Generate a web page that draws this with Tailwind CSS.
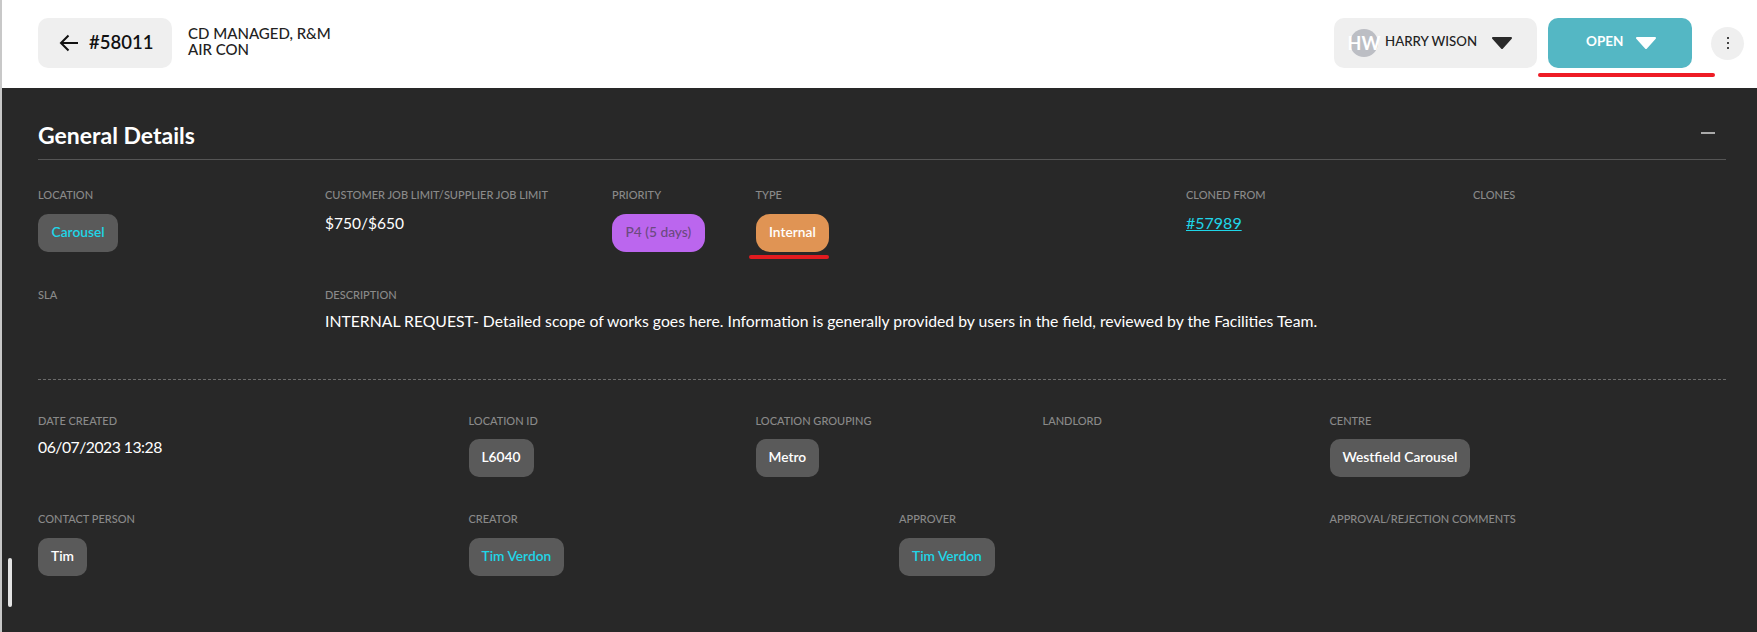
<!DOCTYPE html>
<html lang="en">
<head>
  <meta charset="UTF-8">
  <meta name="viewport" content="width=device-width, initial-scale=1.0">
  <title>Job #58011</title>
  <script src="https://cdn.jsdelivr.net/npm/@tailwindcss/browser@4"></script>
</head>
<body class="h-[632px] overflow-hidden bg-[#282828] font-['Lato',sans-serif]">
  <div class="relative h-[632px] border-l-2 border-[#c8c8c8]">
    <!-- top bar -->
    <header class="flex h-[88px] items-center justify-between bg-white pb-[2px] pl-[36px] pr-[13px]">
      <div class="flex items-center">
        <a href="#" class="flex h-[50px] w-[134px] items-center rounded-[10px] bg-[#efefef] pl-[21px] text-[#111]">
          <svg class="h-[18px] w-[20px]" viewBox="0 0 20 18" fill="none" stroke="currentColor" stroke-width="2">
            <path d="M19 9H2M9.5 1.5 2 9l7.500 7.500"/>
          </svg>
          <span class="ml-[10px] pb-[1px] text-[18.5px] font-semibold">#58011</span>
        </a>
        <div class="mb-[4px] ml-[16px] text-[15px] font-medium leading-[16px] text-[#222]">
          <div>CD MANAGED, R&amp;M</div>
          <div>AIR CON</div>
        </div>
      </div>
      <div class="flex items-center">
        <div class="flex h-[50px] w-[203px] items-center rounded-[10px] bg-[#efefef] pl-[16px]">
          <span class="flex h-[28px] w-[28px] items-center justify-center whitespace-nowrap rounded-full bg-[#bcbec4] text-[18px] font-bold text-white">HW</span>
          <span class="mb-[2px] ml-[7px] text-[13.25px] font-medium text-[#222]">HARRY WISON</span>
          <svg class="ml-[15px] h-[12px] w-[20px]" viewBox="0 0 20 12" fill="#2a2a2a" stroke="#2a2a2a" stroke-width="2" stroke-linejoin="round"><path d="M1 1h18L10 11z"/></svg>
        </div>
        <div class="relative ml-[11px] flex h-[50px] w-[144px] items-center rounded-[10px] bg-[#54b7c4] pl-[38px]">
          <span class="mb-[4px] text-[13.5px] font-bold text-white">OPEN</span>
          <svg class="ml-[13px] h-[12px] w-[20px]" viewBox="0 0 20 12" fill="#fff" stroke="#fff" stroke-width="2" stroke-linejoin="round"><path d="M1 1h18L10 11z"/></svg>
          <span class="absolute left-[-10px] top-[55px] h-[4px] w-[177px] rounded-full bg-[#ee1c25]"></span>
        </div>
        <button class="ml-[19px] flex h-[33px] w-[33px] flex-col items-center justify-center gap-[3px] rounded-full bg-[#efefef]">
          <span class="h-[2px] w-[2px] bg-[#444]"></span>
          <span class="h-[2px] w-[2px] bg-[#444]"></span>
          <span class="h-[2px] w-[2px] bg-[#444]"></span>
        </button>
      </div>
    </header>

    <!-- general details -->
    <main class="pl-[36px] pr-[31px] pt-[34px]">
      <div class="flex h-[38px] items-start justify-between border-b border-[#555]">
        <h2 class="text-[23px] font-bold leading-[26px] text-white">General Details</h2>
        <span class="mr-[11px] mt-[10px] h-[2px] w-[14px] bg-[#aaa]"></span>
      </div>

      <div class="grid grid-cols-12 gap-x-[34px] gap-y-[36px] pt-[28px]">
        <div class="col-span-2">
          <div class="h-[14px] text-[11px] font-medium leading-[14px] text-[#8a8a8a]">LOCATION</div>
          <span class="mt-[12px] inline-flex h-[38px] items-center rounded-[10px] bg-[#5a5a5a] px-[13.5px] pb-[1px] text-[13.75px] font-semibold text-[#1fd6e8]">Carousel</span>
        </div>
        <div class="col-span-2">
          <div class="h-[14px] whitespace-nowrap text-[11px] font-medium leading-[14px] text-[#8a8a8a]">CUSTOMER JOB LIMIT/SUPPLIER JOB LIMIT</div>
          <div class="mt-[11px] text-[15.5px] leading-[20px] text-white">$750/$650</div>
        </div>
        <div class="col-span-1">
          <div class="h-[14px] text-[11px] font-medium leading-[14px] text-[#8a8a8a]">PRIORITY</div>
          <span class="mt-[12px] inline-flex h-[38px] items-center whitespace-nowrap rounded-[14px] bg-[#bb66ee] px-[13.5px] pb-[1px] text-[13.75px] font-medium text-[#6b4a80]">P4 (5 days)</span>
        </div>
        <div class="col-span-3">
          <div class="h-[14px] text-[11px] font-medium leading-[14px] text-[#8a8a8a]">TYPE</div>
          <span class="relative mt-[12px] inline-flex h-[38px] items-center rounded-[14px] bg-[#e09454] px-[13.5px] pb-[1px] text-[13.75px] font-semibold text-white">
            Internal
            <span class="absolute left-[-7px] top-[41px] h-[4px] w-[80px] rounded-full bg-[#e21b1f]"></span>
          </span>
        </div>
        <div class="col-span-2">
          <div class="h-[14px] text-[11px] font-medium leading-[14px] text-[#8a8a8a]">CLONED FROM</div>
          <a href="#" class="mt-[11px] block text-[16px] leading-[20px] text-[#1fd6e8] underline">#57989</a>
        </div>
        <div class="col-span-2">
          <div class="h-[14px] text-[11px] font-medium leading-[14px] text-[#8a8a8a]">CLONES</div>
        </div>

        <div class="col-span-2">
          <div class="h-[14px] text-[11px] font-medium leading-[14px] text-[#8a8a8a]">SLA</div>
        </div>
        <div class="col-span-10">
          <div class="h-[14px] text-[11px] font-medium leading-[14px] text-[#8a8a8a]">DESCRIPTION</div>
          <p class="mt-[9px] text-[15.75px] leading-[20px] text-white">INTERNAL REQUEST- Detailed scope of works goes here. Information is generally provided by users in the field, reviewed by the Facilities Team.</p>
        </div>
      </div>

      <div class="mt-[48px] border-t border-dashed border-[#6a6a6a]"></div>

      <div class="grid grid-cols-12 gap-x-[34px] gap-y-[35px] pt-[34px]">
        <div class="col-span-3">
          <div class="h-[14px] text-[11px] font-medium leading-[14px] text-[#8a8a8a]">DATE CREATED</div>
          <div class="mt-[9px] text-[15.75px] leading-[20px] tracking-[-0.5px] text-white">06/07/2023 13:28</div>
        </div>
        <div class="col-span-2">
          <div class="h-[14px] text-[11px] font-medium leading-[14px] text-[#8a8a8a]">LOCATION ID</div>
          <span class="mt-[11px] inline-flex h-[38px] items-center rounded-[10px] bg-[#5a5a5a] px-[13px] pb-[1px] text-[13.75px] font-semibold text-white">L6040</span>
        </div>
        <div class="col-span-2">
          <div class="h-[14px] text-[11px] font-medium leading-[14px] text-[#8a8a8a]">LOCATION GROUPING</div>
          <span class="mt-[11px] inline-flex h-[38px] items-center rounded-[10px] bg-[#5a5a5a] px-[13px] pb-[1px] text-[13.75px] font-semibold text-white">Metro</span>
        </div>
        <div class="col-span-2">
          <div class="h-[14px] text-[11px] font-medium leading-[14px] text-[#8a8a8a]">LANDLORD</div>
        </div>
        <div class="col-span-3">
          <div class="h-[14px] text-[11px] font-medium leading-[14px] text-[#8a8a8a]">CENTRE</div>
          <span class="mt-[11px] inline-flex h-[38px] items-center rounded-[10px] bg-[#5a5a5a] px-[13px] pb-[1px] text-[13.75px] font-semibold text-white">Westfield Carousel</span>
        </div>

        <div class="col-span-3">
          <div class="h-[14px] text-[11px] font-medium leading-[14px] text-[#8a8a8a]">CONTACT PERSON</div>
          <span class="mt-[12px] inline-flex h-[38px] items-center rounded-[10px] bg-[#5a5a5a] px-[13px] pb-[1px] text-[13.75px] font-semibold text-white">Tim</span>
        </div>
        <div class="col-span-3">
          <div class="h-[14px] text-[11px] font-medium leading-[14px] text-[#8a8a8a]">CREATOR</div>
          <span class="mt-[12px] inline-flex h-[38px] items-center rounded-[10px] bg-[#5a5a5a] px-[13px] pb-[1px] text-[13.75px] font-semibold text-[#1fd6e8]">Tim Verdon</span>
        </div>
        <div class="col-span-3">
          <div class="h-[14px] text-[11px] font-medium leading-[14px] text-[#8a8a8a]">APPROVER</div>
          <span class="mt-[12px] inline-flex h-[38px] items-center rounded-[10px] bg-[#5a5a5a] px-[13px] pb-[1px] text-[13.75px] font-semibold text-[#1fd6e8]">Tim Verdon</span>
        </div>
        <div class="col-span-3">
          <div class="h-[14px] text-[11px] font-medium leading-[14px] text-[#8a8a8a]">APPROVAL/REJECTION COMMENTS</div>
        </div>
      </div>
    </main>

    <!-- overlay scrollbar thumb -->
    <div class="absolute left-[6px] top-[558px] h-[49px] w-[4px] rounded-full bg-[#e4e4e4]"></div>
  </div>
</body>
</html>
